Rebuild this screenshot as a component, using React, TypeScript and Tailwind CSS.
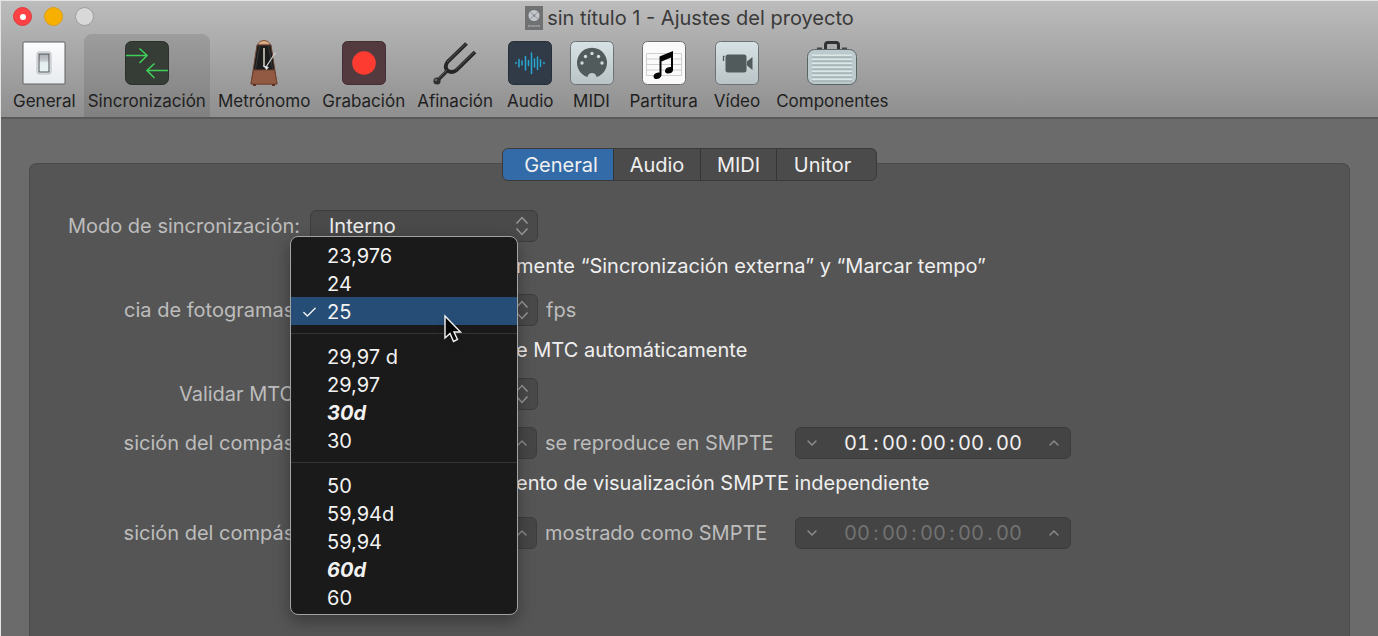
import { useState } from "react";
import type { ReactNode } from "react";
import { Check, ChevronDown, ChevronUp } from "lucide-react";
import clsx from "clsx";

function GeneralIcon() {
  return (
    <svg width="44" height="44" viewBox="0 0 44 44">
      <defs>
        <linearGradient id="plate" x1="0" y1="0" x2="0" y2="1">
          <stop offset="0" stopColor="#fbfcfd" />
          <stop offset="1" stopColor="#e8ebef" />
        </linearGradient>
        <linearGradient id="rocker" x1="0" y1="0" x2="0" y2="1">
          <stop offset="0" stopColor="#a9aeb3" />
          <stop offset="0.4" stopColor="#c9cdd1" />
          <stop offset="0.45" stopColor="#e3edef" />
          <stop offset="1" stopColor="#e9f2f3" />
        </linearGradient>
      </defs>
      <rect x="1" y="1" width="42" height="42" rx="1" fill="url(#plate)" stroke="#5f6265" />
      <rect x="15" y="11" width="14" height="22" rx="2" fill="#e9ebed" stroke="#b9bcc0" />
      <rect x="17" y="13" width="10" height="18" fill="url(#rocker)" stroke="#4f5357" />
    </svg>
  );
}

function SyncIcon() {
  return (
    <svg width="44" height="44" viewBox="0 0 44 44">
      <rect x="0.5" y="0.5" width="43" height="43" rx="6" fill="#353d36" stroke="#2a302b" />
      <g fill="none" stroke="#3fce57" strokeWidth="1.6">
        <path d="M1 14.5H21.5M14.5 7.5L22 14.5L14.5 22" />
        <path d="M43 29.5H22.5M29.5 22.5L22 29.5L29.5 37" />
      </g>
    </svg>
  );
}

function MetronomeIcon() {
  return (
    <svg width="30" height="48" viewBox="0 0 30 48">
      <path d="M8 6L11 2.500Q15 0 19 2.500L22 6Z" fill="#d8a883" stroke="#7c5340" />
      <path d="M8 6H22L28 45H2Z" fill="#1b1b1b" stroke="#6b4434" />
      <path d="M10.500 7L6.500 30M19.500 7L23.500 30" stroke="#3b3b3b" />
      <path d="M14 9H16V28H14Z" fill="#aaa69c" />
      <path d="M4.500 31H25.500L28 45H2Z" fill="#925a43" stroke="#74432f" />
      <path d="M17 28L26.500 13.500" stroke="#d2d4d5" strokeWidth="1.200" />
      <path d="M14 26.500L20 28L17.500 31Z" fill="#dfe3e5" />
      <path d="M4 46H7M23 46H26" stroke="#5c3325" strokeWidth="2" />
    </svg>
  );
}

function RecordIcon() {
  return (
    <svg width="44" height="44" viewBox="0 0 44 44">
      <rect x="0.5" y="0.5" width="43" height="43" rx="5" fill="#533a3e" stroke="#412f33" />
      <circle cx="22" cy="22" r="11.800" fill="#fe3b31" />
    </svg>
  );
}

function TuningIcon() {
  return (
    <svg width="44" height="44" viewBox="0 0 44 44" fill="none">
      <path d="M4 40L15 29" stroke="#2b2b2b" strokeWidth="3.400" />
      <path d="M33.500 2.500L14.500 21Q11 26 14.500 29.500Q18.500 32.500 23 29.500L42 11" stroke="#252525" strokeWidth="3.800" />
      <path d="M33 2.500L14 21M41.500 11L22.500 29M5 38L14 29" stroke="#555555" />
      <circle cx="4" cy="40" r="3.600" fill="#303030" />
      <circle cx="3" cy="39" r="1.300" fill="#676767" />
    </svg>
  );
}

function AudioIcon() {
  return (
    <svg width="44" height="44" viewBox="0 0 44 44">
      <rect x="0.5" y="0.5" width="43" height="43" rx="5" fill="#313b48" stroke="#262e38" />
      <path
        d="M8 21.500V22.500M11 18.500V26M14 20V24M17.500 15.500V29M20.500 19.500V24.500M23.500 12V32.500M26.500 18V26M29.500 16V28.500M32.500 19V25.500M36 21.500V22.500"
        stroke="#2ba6d2"
        strokeWidth="1.500"
        strokeLinecap="round"
      />
    </svg>
  );
}

function PaleTile({ id }: { id: string }) {
  return (
    <>
      <defs>
        <linearGradient id={id} x1="0" y1="0" x2="0" y2="1">
          <stop offset="0" stopColor="#d7e2e5" />
          <stop offset="1" stopColor="#bac4c7" />
        </linearGradient>
      </defs>
      <rect x="0.5" y="0.5" width="43" height="43" rx="5" fill={`url(#${id})`} stroke="#6c7375" />
    </>
  );
}

function MidiIcon() {
  return (
    <svg width="44" height="44" viewBox="0 0 44 44">
      <PaleTile id="midi" />
      <path d="M17.500 36A15 15 0 1 1 26.500 36C26 30.500 18 30.500 17.500 36Z" fill="#525b5b" />
      <g fill="#d0dadc">
        <circle cx="12" cy="22" r="1.700" />
        <circle cx="15.500" cy="15.500" r="1.700" />
        <circle cx="22" cy="12.500" r="1.700" />
        <circle cx="28.500" cy="15.500" r="1.700" />
        <circle cx="32" cy="22" r="1.700" />
      </g>
    </svg>
  );
}

function ScoreIcon() {
  return (
    <svg width="44" height="44" viewBox="0 0 44 44">
      <rect x="0.5" y="0.5" width="43" height="43" rx="5" fill="#fafafa" stroke="#6f6f6f" />
      <path d="M4.500 12.500H39.500V34.500H4.500ZM4.500 18H39.500M4.500 23.500H39.500M4.500 29H39.500" fill="none" stroke="#cfcfcf" />
      <path d="M17.500 15.500L31 10V29.500Q30 33 25 32.500Q21.500 31 24 27.500Q26 25.500 29 26V16.500L19.500 20.500V34.500Q18 38.500 13.500 38Q10 36.500 12.500 33Q14.500 31 17.500 31.500Z" fill="#050505" />
    </svg>
  );
}

function VideoIcon() {
  return (
    <svg width="44" height="44" viewBox="0 0 44 44">
      <PaleTile id="video" />
      <rect x="10.500" y="13.500" width="21" height="18" rx="2.500" fill="#525b5b" />
      <path d="M32 20.500L37.500 16V29L32 24.500Z" fill="#525b5b" />
      <path d="M9.500 15.500H8.500V20" fill="none" stroke="#525b5b" strokeWidth="1.300" />
    </svg>
  );
}

function ComponentsIcon() {
  return (
    <svg width="50" height="44" viewBox="0 0 50 44">
      <path d="M18.500 8V4Q18.500 1.500 21 1.500H29Q31.500 1.500 31.500 4V8" fill="none" stroke="#2f3233" strokeWidth="3" />
      <path d="M10 7.500H15M35 7.500H40" stroke="#404446" strokeWidth="2" />
      <rect x="0.5" y="8.500" width="49" height="35" rx="7" fill="#bccacd" stroke="#596264" />
      <path
        d="M5 14.500H45M5 18.500H45M5 22.500H45M5 26.500H45M5 30.500H45M5 34.500H45M5 38.500H45"
        stroke="#dce7e9"
        strokeWidth="2"
      />
      <path d="M5 16H45M5 20H45M5 24H45M5 28H45M5 32H45M5 36H45M5 40H45" stroke="#95a2a5" />
    </svg>
  );
}

function ProjectIcon() {
  return (
    <svg width="18" height="24" viewBox="0 0 18 24">
      <rect width="18" height="24" fill="#707172" />
      <circle cx="9" cy="9.500" r="5.500" fill="#c3c7cb" />
      <path d="M9 9.500L5 5.500M9 9.500L13 6M9 9.500L13 13M9 9.500L5 13" stroke="#94999e" />
      <circle cx="9" cy="9.500" r="1.200" fill="#858a90" />
      <path d="M3 20H15" stroke="#a4a5a6" strokeWidth="1.500" strokeDasharray="2 0.500" />
    </svg>
  );
}

const TOOLBAR: { label: string; icon: ReactNode; pad: string }[] = [
  { label: "General", icon: <GeneralIcon />, pad: "px-1" },
  { label: "Sincronización", icon: <SyncIcon />, pad: "px-1" },
  { label: "Metrónomo", icon: <MetronomeIcon />, pad: "px-1" },
  { label: "Grabación", icon: <RecordIcon />, pad: "px-1" },
  { label: "Afinación", icon: <TuningIcon />, pad: "px-1" },
  { label: "Audio", icon: <AudioIcon />, pad: "px-1.5" },
  { label: "MIDI", icon: <MidiIcon />, pad: "px-1.5" },
  { label: "Partitura", icon: <ScoreIcon />, pad: "px-1.5" },
  { label: "Vídeo", icon: <VideoIcon />, pad: "px-1.5" },
  { label: "Componentes", icon: <ComponentsIcon />, pad: "px-1.5" },
];

const TABS = [
  { label: "General", className: "w-[111px] pl-1.5" },
  { label: "Audio", className: "w-[87px]" },
  { label: "MIDI", className: "w-[76px]" },
  { label: "Unitor", className: "w-[99px] pr-2" },
];

const RATE_GROUPS = [
  ["23,976", "24", "25"],
  ["29,97 d", "29,97", "30d", "30"],
  ["50", "59,94d", "59,94", "60d", "60"],
];

// drop-frame rates without the video speed are shown emphasised
const EMPHASISED = ["30d", "60d"];

function UpDown() {
  return (
    <svg className="pointer-events-none absolute top-1.5 right-[9px]" width="14" height="20" viewBox="0 0 14 20" fill="none" stroke="#979797" strokeWidth="1.500">
      <path d="M1.500 7.500L7 1.500L12.500 7.500M1.500 12.500L7 18.500L12.500 12.500" />
    </svg>
  );
}

function Popup({ id, options }: { id: string; options: string[] }) {
  return (
    <div className="relative w-[228px]">
      <select
        id={id}
        className="block h-8 w-full appearance-none rounded-md border border-[#3d3d3d] bg-[#4a4a4a] pl-[18px] text-[20px] leading-7 text-[#ececec]"
      >
        {options.map((o) => (
          <option key={o}>{o}</option>
        ))}
      </select>
      <UpDown />
    </div>
  );
}

function RateMenu({ value, onPick }: { value: string; onPick: (v: string) => void }) {
  return (
    <div
      role="listbox"
      aria-label="Velocidad"
      className="absolute -top-[58px] -left-5 z-20 w-[228px] rounded-lg border border-[#a3a3a3] bg-[#1a1a1a] pt-1 pb-[3px] shadow-[0_6px_16px_rgba(0,0,0,0.35)]"
    >
      {RATE_GROUPS.map((group, i) => (
        <div key={i}>
          {i > 0 && (
            <div className="flex h-[17px] items-center">
              <div className="h-px w-full bg-[#353535]" />
            </div>
          )}
          {group.map((rate) => (
            <button
              key={rate}
              type="button"
              role="option"
              aria-selected={rate === value}
              onClick={() => onPick(rate)}
              className={clsx(
                "flex h-7 w-full items-center pt-0.5 text-left text-[20px] leading-6 text-[#f2f2f2]",
                rate === value && "bg-[#264d76]",
                EMPHASISED.includes(rate) && "font-bold italic"
              )}
            >
              <span className="flex w-9 justify-center">{rate === value && <Check size={17} strokeWidth={2} />}</span>
              {rate}
            </button>
          ))}
        </div>
      ))}
      {/* Pointer */}
      <svg className="pointer-events-none absolute top-[77px] left-[152px] drop-shadow-md" width="20" height="30" viewBox="0 0 20 30">
        <path d="M2 2V24L7 19.500L10.500 27.500L14.500 25.500L11 18H17.500Z" fill="#050505" stroke="#f4f4f4" strokeWidth="1.400" />
      </svg>
    </div>
  );
}

function Timecode({ label, value, disabled = false }: { label: string; value: string; disabled?: boolean }) {
  const parts = value.split(/([:.])/);
  return (
    <div
      role="group"
      aria-label={label}
      className={clsx(
        "flex h-8 w-[276px] items-center justify-between rounded-md border border-[#3c3c3c] bg-[#444444] px-2",
        disabled ? "text-[#727272]" : "text-[#f0f0f0]"
      )}
    >
      <button type="button" aria-label="Reducir" className="text-[#8f8f8f]">
        <ChevronDown size={16} />
      </button>
      <div className="flex items-center text-[20px] leading-7 tabular-nums">
        {parts.map((p, i) =>
          i % 2 ? (
            <span key={i} className="w-3 text-center">
              {p}
            </span>
          ) : (
            <input key={i} defaultValue={p} disabled={disabled} aria-label={`${label} ${i / 2 + 1}`} className="w-[26px] text-center" />
          )
        )}
      </div>
      <button type="button" aria-label="Aumentar" className="text-[#8f8f8f]">
        <ChevronUp size={16} />
      </button>
    </div>
  );
}

function Bar({ id }: { id: string }) {
  return (
    <div className="flex h-8 w-[227px] items-center rounded-md border border-[#3d3d3d] bg-[#464646] pr-1.5">
      <input id={id} className="min-w-0 flex-1" />
      <button type="button" aria-label="Aumentar" className="text-[#8f8f8f]">
        <ChevronUp size={16} />
      </button>
    </div>
  );
}

function Row({ label, htmlFor, className, children }: { label?: string; htmlFor?: string; className?: string; children: ReactNode }) {
  return (
    <div className={clsx("flex h-8 items-center", className)}>
      <div className="mr-2.5 w-[270px] shrink-0 text-right text-[#bdbdbd]">{label && <label htmlFor={htmlFor}>{label}</label>}</div>
      {children}
    </div>
  );
}

export default function App() {
  const [section, setSection] = useState("Sincronización");
  const [tab, setTab] = useState("General");
  const [rate, setRate] = useState("25");

  return (
    <div className="flex min-h-screen flex-col overflow-hidden border-t border-l border-[#e4e4e4] bg-[#6b6b6b] font-['Inter',sans-serif] whitespace-nowrap">
      <header className="border-b-2 border-[#595959] bg-linear-to-b from-[#bcbcbc] to-[#8f8f8f]">
        {/* Title bar */}
        <div className="relative flex h-[33px] items-center justify-center gap-1 text-[20px] leading-7 text-[#3a3a3a]">
          <div className="absolute top-1.5 left-3 flex gap-3">
            <button type="button" aria-label="Cerrar" className="flex size-[19px] items-center justify-center rounded-full border border-[#e13a3a] bg-[#fe4144]">
              <span className="size-1.5 rounded-full bg-white" />
            </button>
            <button type="button" aria-label="Minimizar" className="size-[19px] rounded-full border border-[#dd9d10] bg-[#f8b000]" />
            <button type="button" aria-label="Ampliar" className="size-[19px] rounded-full border border-[#9e9e9e] bg-[#d8d8d8]" />
          </div>
          <ProjectIcon />
          <h1>sin título 1 - Ajustes del proyecto</h1>
        </div>

        {/* Toolbar */}
        <nav className="flex gap-1 pl-2">
          {TOOLBAR.map(({ label, icon, pad }) => (
            <button
              key={label}
              type="button"
              onClick={() => setSection(label)}
              className={clsx(
                "flex h-[83px] flex-col items-center rounded-t-lg text-[17px] leading-6 text-[#1f1f1f]",
                pad,
                label === section && "bg-black/10"
              )}
            >
              <span className="flex h-[55px] items-center pt-0.5">{icon}</span>
              {label}
            </button>
          ))}
        </nav>
      </header>

      <main className="flex flex-1 flex-col px-7 pt-[29px] text-[20px] leading-7">
        {/* Segmented tabs */}
        <div role="tablist" className="relative z-10 flex h-[33px] self-center divide-x divide-[#353535] overflow-hidden rounded-md border border-[#3a3a3a] bg-[#4b4b4b]">
          {TABS.map((t) => (
            <button
              key={t.label}
              type="button"
              role="tab"
              aria-selected={t.label === tab}
              onClick={() => setTab(t.label)}
              className={clsx("text-[#f0f0f0]", t.className, t.label === tab && "bg-[#336ba8]")}
            >
              {t.label}
            </button>
          ))}
        </div>

        <section className="-mt-[18px] flex-1 rounded-t-lg border border-b-0 border-[#4b4b4b] bg-[#555555] pt-[46px]">
          <Row label="Modo de sincronización:" htmlFor="mode">
            <Popup id="mode" options={["Interno"]} />
          </Row>
          <Row className="mt-2">
            <p className="ml-[206px] text-[#efefef]">mente “Sincronización externa” y “Marcar tempo”</p>
          </Row>
          <Row label="cia de fotogramas:" htmlFor="rate" className="mt-3">
            <div className="relative">
              <Popup id="rate" options={["25"]} />
              <RateMenu value={rate} onPick={setRate} />
            </div>
            <span className="ml-2 text-[#bdbdbd]">fps</span>
          </Row>
          <Row className="mt-2">
            <p className="ml-[206px] text-[#efefef]">e MTC automáticamente</p>
          </Row>
          <Row label="Validar MTC:" htmlFor="validate" className="mt-3">
            <Popup id="validate" options={[]} />
          </Row>
          <Row label="sición del compás:" htmlFor="bar-play" className="mt-[17px]">
            <Bar id="bar-play" />
            <span className="ml-2 w-[250px] text-[#bdbdbd]">se reproduce en SMPTE</span>
            <Timecode label="SMPTE" value="01:00:00:00.00" />
          </Row>
          <Row className="mt-2">
            <p className="ml-[206px] text-[#efefef]">ento de visualización SMPTE independiente</p>
          </Row>
          <Row label="sición del compás:" htmlFor="bar-view" className="mt-[18px]">
            <Bar id="bar-view" />
            <span className="ml-2 w-[250px] text-[#bdbdbd]">mostrado como SMPTE</span>
            <Timecode label="SMPTE mostrado" value="00:00:00:00.00" disabled />
          </Row>
        </section>
      </main>
    </div>
  );
}
